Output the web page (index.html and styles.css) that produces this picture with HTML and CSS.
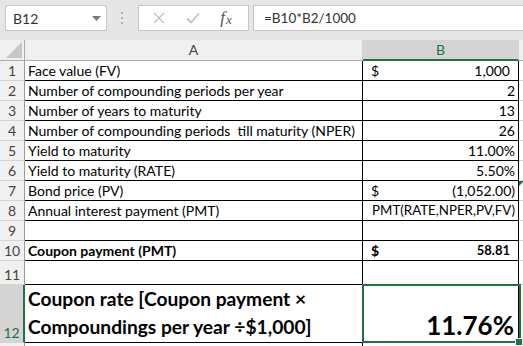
FILE: index.html
```html
<!DOCTYPE html>
<html lang="en">
<head>
  <meta charset="UTF-8">
  <title>Coupon rate</title>
  <link rel="stylesheet" href="styles.css">
</head>
<body>
  <div class="toolbar">
    <div class="namebox">
      <span>B12</span>
      <svg width="9" height="5" viewBox="0 0 9 5"><path d="M0 0h9L4.5 5z" fill="#7a7a7a"/></svg>
    </div>
    <div class="grip">
      <svg width="3" height="12" viewBox="0 0 3 12"><rect x="0" y="0" width="2" height="2" fill="#b3b3b3"/><rect x="0" y="5" width="2" height="2" fill="#b3b3b3"/><rect x="0" y="10" width="2" height="2" fill="#b3b3b3"/></svg>
    </div>
    <div class="fxbox">
      <svg width="12" height="12" viewBox="0 0 12 12"><path d="M1 1l10 10M11 1L1 11" stroke="#c2c2c2" stroke-width="1.4"/></svg>
      <svg width="14" height="12" viewBox="0 0 14 12"><path d="M1 6.5l4 4L13 1.5" stroke="#c2c2c2" stroke-width="1.8" fill="none"/></svg>
      <span class="fx">f<span class="fx-x">x</span></span>
    </div>
    <div class="formula">=B10*B2/1000</div>
  </div>

  <div class="sheet">
    <div class="corner"><svg width="16" height="16" viewBox="0 0 16 16"><path d="M16 0v16H0z" fill="#c6c6c6"/></svg></div>
    <div class="colhead">A</div>
    <div class="colhead sel">B</div>
    <div class="colhead"></div>

    <div class="rowhead">1</div>
    <div class="cell">Face value (FV)</div>
    <div class="cell val acct"><span>$</span><span class="pad">1,000</span></div>
    <div class="cell c"></div>

    <div class="rowhead">2</div>
    <div class="cell">Number of compounding periods per year</div>
    <div class="cell val">2</div>
    <div class="cell c"></div>

    <div class="rowhead">3</div>
    <div class="cell">Number of years to maturity</div>
    <div class="cell val">13</div>
    <div class="cell c"></div>

    <div class="rowhead">4</div>
    <div class="cell">Number of compounding periods&nbsp; till maturity (NPER)</div>
    <div class="cell val">26</div>
    <div class="cell c"></div>

    <div class="rowhead">5</div>
    <div class="cell">Yield to maturity</div>
    <div class="cell val">11.00%</div>
    <div class="cell c"></div>

    <div class="rowhead">6</div>
    <div class="cell">Yield to maturity (RATE)</div>
    <div class="cell val">5.50%</div>
    <div class="cell c"></div>

    <div class="rowhead">7</div>
    <div class="cell">Bond price (PV)</div>
    <div class="cell val acct"><span>$</span><span>(1,052.00)</span></div>
    <div class="cell c"><span class="flag"></span></div>

    <div class="rowhead">8</div>
    <div class="cell">Annual interest payment (PMT)</div>
    <div class="cell val"><span class="narrow">PMT(RATE,NPER,PV,FV)</span></div>
    <div class="cell c"></div>

    <div class="rowhead">9</div>
    <div class="cell"></div>
    <div class="cell val"></div>
    <div class="cell c"></div>

    <div class="rowhead">10</div>
    <div class="cell bold">Coupon payment (PMT)</div>
    <div class="cell val acct bold"><span>$</span><span class="pad small">58.81</span></div>
    <div class="cell c"></div>

    <div class="rowhead">11</div>
    <div class="cell"></div>
    <div class="cell val"></div>
    <div class="cell c"></div>

    <div class="rowhead active">12</div>
    <div class="cell big">Coupon rate [Coupon payment ×<br>Compoundings per year ÷$1,000]</div>
    <div class="cell val result"><span>11.76%</span><span class="handle"></span></div>
    <div class="cell c"></div>

    <div class="rowhead"></div>
    <div class="cell"></div>
    <div class="cell val"></div>
    <div class="cell c"></div>
  </div>
</body>
</html>
```

FILE: styles.css
```css
body {
  margin: 0;
  width: 523px;
  height: 346px;
  overflow: hidden;
  font-family: Lato, "Liberation Sans", sans-serif;
  background-color: #fff;
}
.toolbar {
  height: 40px;
  background-color: #e6e6e6;
  display: flex;
  align-items: flex-start;
  padding: 5px 0 0 5px;
  box-sizing: border-box;
}
.namebox {
  width: 102px;
  height: 26px;
  background-color: #fff;
  border: 1px solid #c6c6c6;
  display: flex;
  align-items: center;
  justify-content: space-between;
  padding: 0 5px 0 7px;
  box-sizing: border-box;
  font-size: 14px;
  color: #333;
}
.grip {
  width: 31px;
  height: 26px;
  display: flex;
  align-items: center;
  justify-content: center;
}
.fxbox {
  width: 111px;
  height: 26px;
  background-color: #fff;
  border: 1px solid #c6c6c6;
  box-sizing: border-box;
  display: flex;
  align-items: center;
  justify-content: space-around;
  padding: 0 6px 0 4px;
}
.fx {
  font-family: "Liberation Serif", serif;
  font-style: italic;
  font-size: 17px;
  color: #555;
  line-height: 20px;
}
.fx-x {
  font-size: 13px;
  margin-left: 1px;
  position: relative;
  top: 1px;
}
.formula {
  flex: 1;
  margin-left: 4px;
  height: 26px;
  background-color: #fff;
  border: 1px solid #c6c6c6;
  border-right: none;
  box-sizing: border-box;
  padding-left: 10px;
  line-height: 24px;
  font-size: 13.5px;
  color: #333;
}
.sheet {
  display: grid;
  grid-template-columns: 25px 338px 156px 1fr;
  grid-template-rows: 21px repeat(10, 20px) 24px 58px 20px;
  font-size: 14px;
}
.corner {
  background-color: #f0f0f0;
  border-right: 1px solid #ababab;
  border-bottom: 1px solid #ababab;
  display: flex;
  align-items: flex-end;
  justify-content: flex-end;
  padding: 0 2px 2px 0;
}
.colhead {
  background-color: #f0f0f0;
  border-right: 1px solid #d4d4d4;
  border-bottom: 1px solid #ababab;
  text-align: center;
  line-height: 20px;
  color: #444;
}
.colhead.sel {
  background-color: #d4d4d4;
  color: #217346;
  border-bottom: 2px solid #217346;
  line-height: 19px;
}
.rowhead {
  background-color: #f0f0f0;
  border-right: 1px solid #9b9b9b;
  border-bottom: 1px solid #d4d4d4;
  color: #444;
  display: flex;
  align-items: flex-end;
  justify-content: center;
  line-height: 19px;
}
.rowhead.active {
  background-color: #d4d4d4;
  color: #217346;
  border-right: 2px solid #217346;
}
.cell {
  border-bottom: 1px solid #000;
  border-right: 1px solid #000;
  padding: 0 3px;
  line-height: 19px;
  white-space: nowrap;
  color: #000;
  display: flex;
  align-items: flex-end;
}
.cell.val {
  justify-content: flex-end;
}
.cell.acct {
  justify-content: space-between;
  padding-left: 8px;
}
.pad {
  padding-right: 5px;
}
.small {
  font-size: 13px;
}
.narrow {
  font-size: 13.3px;
}
.bold {
  font-weight: bold;
}
.cell.c {
  border-right: none;
  border-bottom: 1px solid #d4d4d4;
  position: relative;
}
.flag {
  position: absolute;
  top: 0;
  left: 0;
  border-top: 5px solid #217346;
  border-right: 5px solid transparent;
}
.cell.big {
  font-size: 19.2px;
  font-weight: bold;
  line-height: 28px;
  white-space: normal;
  padding-bottom: 1px;
}
.cell.result {
  position: relative;
  font-size: 26px;
  font-weight: bold;
  line-height: 34px;
  padding-right: 4px;
}
.cell.result::after {
  content: "";
  position: absolute;
  top: -1px;
  left: -1px;
  right: -3px;
  bottom: -1px;
  border: 2px solid #217346;
}
.handle {
  position: absolute;
  right: -5px;
  bottom: -4px;
  width: 6px;
  height: 6px;
  background-color: #217346;
  border: 1px solid #fff;
  z-index: 2;
}
```
